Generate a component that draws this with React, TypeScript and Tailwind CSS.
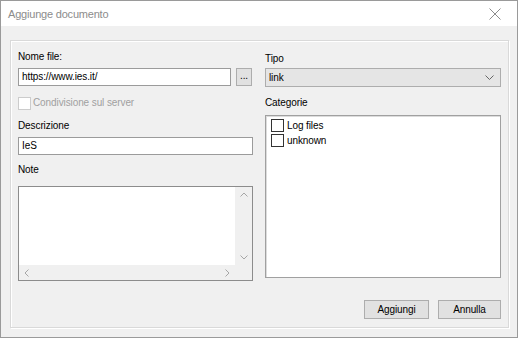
import React from "react";

const font = { fontFamily: '"Liberation Sans", Arial, sans-serif' };

function Check({ disabled }: { disabled?: boolean }) {
  return (
    <span
      className={
        "inline-block w-[13px] h-[13px] border bg-white shrink-0 " +
        (disabled ? "border-[#cccccc]" : "border-[#333333]")
      }
    />
  );
}

export default function App() {
  return (
    <div
      className="w-[518px] h-[338px] border border-[#9a9a9a] bg-[#f0f0f0] flex flex-col text-[10px] tracking-[-0.1px] text-black leading-[16px]"
      style={font}
    >
      <div className="h-[25px] bg-white flex items-center justify-between pl-[7px] pr-[16px] shrink-0">
        <span className="text-[11px] tracking-[-0.2px] text-[#8c8c8c]">Aggiunge documento</span>
        <svg width="12" height="12" viewBox="0 0 12 12">
          <path d="M0.5 0.5 L11.5 11.5 M11.5 0.5 L0.5 11.5" stroke="#8c8c8c" strokeWidth="1" fill="none" />
        </svg>
      </div>
      <div className="flex-1 pl-[9px] pr-[8px] pt-[14px] pb-[11px] flex">
        <div className="flex-1 border border-[#d9d9d9] shadow-[inset_1px_1px_0_#ffffff,1px_1px_0_#ffffff] pl-[7px] pr-[7px] pt-[8px] pb-[8px] flex flex-col">
          <div className="flex gap-[12px]">
            {/* left column */}
            <div className="w-[235px] flex flex-col">
              <div className="h-[16px] leading-[16px]">Nome file:</div>
              <div className="flex mt-[3px] gap-[5px]">
                <div className="w-[213px] h-[18px] border border-[#9b9b9b] bg-white flex items-center pl-[3px]">
                  https://www.ies.it/
                </div>
                <div className="w-[16px] h-[18px] border border-[#adadad] bg-[#e1e1e1] flex items-center justify-center text-[10px] leading-none pb-[2px]">
                  ...
                </div>
              </div>
              <div className="flex items-center gap-[1px] mt-[10px] h-[14px]">
                <Check disabled />
                <span className="text-[#a0a0a0] ml-[1px]">Condivisione sul server</span>
              </div>
              <div className="mt-[8px] h-[16px]">Descrizione</div>
              <div className="mt-[3px] h-[18px] border border-[#9b9b9b] bg-white flex items-center pl-[3px]">IeS</div>
              <div className="mt-[7px] h-[16px]">Note</div>
              <div className="mt-[8px] h-[95px] border border-[#8c8c8c] bg-white flex flex-col">
                <div className="flex flex-1">
                  <div className="flex-1 bg-white" />
                  <div className="w-[17px] bg-[#f0f0f0] flex flex-col items-center justify-between py-[5px]">
                    <svg width="8" height="5" viewBox="0 0 8 5"><path d="M0.5 4.5 L4 1 L7.5 4.5" stroke="#a6a6a6" fill="none" /></svg>
                    <svg width="8" height="5" viewBox="0 0 8 5"><path d="M0.5 0.5 L4 4 L7.5 0.5" stroke="#a6a6a6" fill="none" /></svg>
                  </div>
                </div>
                <div className="h-[15px] bg-[#f0f0f0] flex items-center justify-between pl-[5px] pr-[22px]">
                  <svg width="5" height="8" viewBox="0 0 5 8"><path d="M4.5 0.5 L1 4 L4.5 7.5" stroke="#a6a6a6" fill="none" /></svg>
                  <svg width="5" height="8" viewBox="0 0 5 8"><path d="M0.5 0.5 L4 4 L0.5 7.5" stroke="#a6a6a6" fill="none" /></svg>
                </div>
              </div>
            </div>
            {/* right column */}
            <div className="w-[236px] flex flex-col">
              <div className="h-[16px] mt-[2px]">Tipo</div>
              <div className="mt-[1px] h-[19px] border border-[#adadad] bg-[#e5e5e5] flex items-center justify-between pl-[3px] pr-[6px]">
                <span>link</span>
                <svg width="9" height="5" viewBox="0 0 9 5"><path d="M0.5 0.5 L4.5 4.5 L8.5 0.5" stroke="#666666" fill="none" /></svg>
              </div>
              <div className="mt-[8px] h-[16px]">Categorie</div>
              <div className="mt-[4px] h-[163px] border border-[#a0a0a0] shadow-[inset_1px_1px_0_#dcdcdc] bg-white pt-[3px] pl-[5px] flex flex-col gap-[2px]">
                <div className="flex items-center gap-[3px] h-[13px]">
                  <Check />
                  <span>Log files</span>
                </div>
                <div className="flex items-center gap-[3px] h-[13px]">
                  <Check />
                  <span>unknown</span>
                </div>
              </div>
            </div>
          </div>
          <div className="flex justify-end gap-[9px] mt-[19px]">
            <button className="w-[65px] h-[19px] border border-[#adadad] bg-[#e1e1e1] flex items-center justify-center text-[10px] leading-none">
              Aggiungi
            </button>
            <button className="w-[63px] h-[19px] border border-[#adadad] bg-[#e1e1e1] flex items-center justify-center text-[10px] leading-none">
              Annulla
            </button>
          </div>
        </div>
      </div>
    </div>
  );
}
